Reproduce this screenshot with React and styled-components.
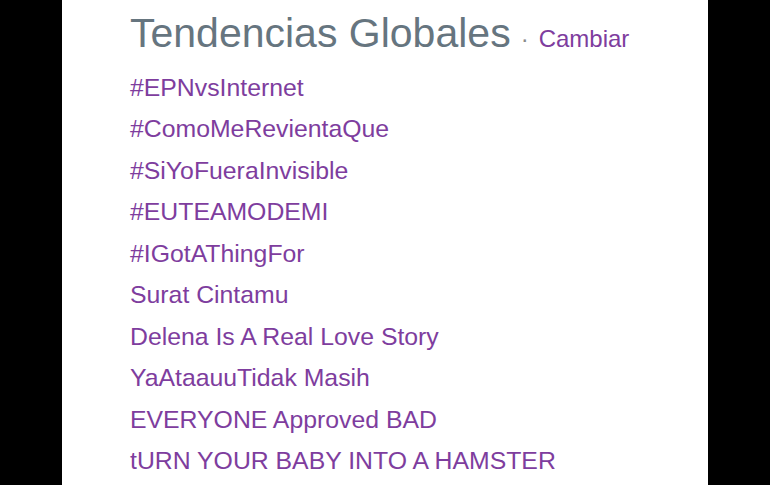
import React from "react";
import styled, { createGlobalStyle } from "styled-components";

const GlobalStyle = createGlobalStyle`
  html, body {
    margin: 0;
    padding: 0;
    background: #000;
  }
  #root {
    height: 485px;
  }
`;

const Page = styled.div`
  display: flex;
  justify-content: center;
  height: 485px;
  padding-left: 62px;
  padding-right: 62px;
  box-sizing: border-box;
`;

const Column = styled.div`
  flex: 1;
  background: #fff;
  padding: 10px 0 0 68px;
  font-family: "Liberation Sans", Arial, sans-serif;
  overflow: hidden;
`;

const Header = styled.div`
  display: flex;
  align-items: baseline;
  height: 46px;
  white-space: nowrap;
`;

const Title = styled.h3`
  margin: 0;
  font-size: 41px;
  line-height: 46px;
  font-weight: normal;
  color: #66757f;
`;

const Change = styled.span`
  margin-left: 10px;
  font-size: 24px;
  color: #8a8a8a;

  a {
    color: #7e3d9e;
    text-decoration: none;
    margin-left: 10px;
  }
`;

const List = styled.ul`
  list-style: none;
  margin: 10.8px 0 0;
  padding: 0;
`;

const Item = styled.li`
  font-size: 24.8px;
  line-height: 41.5px;
  color: #7e3d9e;
  white-space: nowrap;
`;

const trends = [
  "#EPNvsInternet",
  "#ComoMeRevientaQue",
  "#SiYoFueraInvisible",
  "#EUTEAMODEMI",
  "#IGotAThingFor",
  "Surat Cintamu",
  "Delena Is A Real Love Story",
  "YaAtaauuTidak Masih",
  "EVERYONE Approved BAD",
  "tURN YOUR BABY INTO A HAMSTER",
];

const App = () => {
  return (
    <>
      <GlobalStyle />
      <Page>
        <Column>
          <Header>
            <Title>Tendencias Globales</Title>
            <Change>
              ·<a href="#">Cambiar</a>
            </Change>
          </Header>
          <List>
            {trends.map((t) => (
              <Item key={t}>{t}</Item>
            ))}
          </List>
        </Column>
      </Page>
    </>
  );
};

export default App;
